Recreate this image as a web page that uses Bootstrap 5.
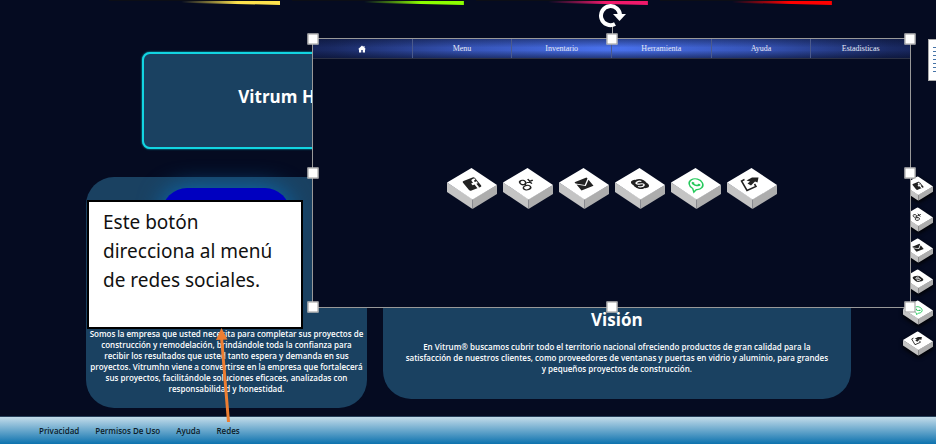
<!DOCTYPE html>
<html lang="es">
<head>
<meta charset="utf-8">
<meta name="viewport" content="width=device-width, initial-scale=1">
<title>Vitrum</title>
<link rel="stylesheet" href="https://cdn.jsdelivr.net/npm/bootstrap@5.3.0/dist/css/bootstrap.min.css">
<style>
body{background:#050b21;color:#fff;font:600 8px/11px "Open Sans",sans-serif;overflow:hidden}
a{text-decoration:none}
.strips{display:grid;grid-template-columns:repeat(4,1fr);gap:12px;padding:0 11.1% 0 11.6%}
.strips svg{display:block;width:100%;height:5px;border-top:1px solid #0c0e16}
.banner{margin:47px 15.2% 0;height:97px;border:2px solid #12d5e2;border-radius:8px;background:#1a4161;box-shadow:0 0 2px #12d5e2;padding-left:94px}
.banner h1{font:700 17px/22px "Open Sans",sans-serif}
.about{display:grid;grid-template-columns:3fr 5fr;gap:16px;padding:28px 9.1% 8px 9.2%}
.panel{background:#1a4161;border-radius:28px;white-space:nowrap}
.pill{width:128px;height:50px;border-radius:36px;background:#0000c0;box-shadow:0 0 24px #0a6cb4}
.mission{padding:11px 0 14px}
.mission p{margin:90px 0 0}
.vision{padding:132px 0 25px}
.vision h2{font:700 17px/22px "Open Sans",sans-serif;margin:0 0 10px}
.vision p{margin:0}
.foot{background:linear-gradient(#c3dcea,#0d72ae);height:28px;gap:16px;padding-left:39px;border-top:1px solid #27405a}
.foot a{color:#0c1c28}
.win{left:312px;top:38px;width:599px;height:270px;background:#050b21;border:1px solid #999;z-index:3}
.menu{height:20px;background:linear-gradient(#050b2166,transparent 45%,transparent 60%,#050b2180),radial-gradient(ellipse 55% 260% at 50% 50%,#4a72ee,#3553b5 45%,#1a2a63 85%,#142052);border-bottom:1px solid #2c3144}
.menu a{color:#e6e9f5;font:400 8px/20px "Liberation Serif",serif;border-right:1px solid #4b5a8c}
.menu a:last-child{border:0}
.keys{gap:6px;padding:109px 0 0 134px}
.keys a,.side a{display:block}
.keys svg{display:block;width:50px;height:41px}
.side{right:3px;top:176px;gap:6px;z-index:2}
.side svg{display:block;width:30px;height:25px;filter:drop-shadow(0 2px 2px #000)}
.grip{width:11px;height:11px;background:#fff;border:1px solid #999;transform:translate(-50%,-50%)}
.g0{left:0}.g5{left:50%}.g10{left:100%}
.t0{top:0}.t5{top:50%}.t10{top:100%}
.stem{left:50%;top:-15px;height:15px;border-left:1px solid #aaa}
.turn{left:50%;top:-37px;width:30px;height:26px;margin-left:-14px}
.note{left:87px;top:200px;width:216px;height:129px;background:#fff;color:#111;border:2px solid #000;padding:6px 14px;font:400 19px/29px "Noto Sans",sans-serif;z-index:4;white-space:nowrap}
.arrow{left:210px;top:328px;width:30px;height:96px;z-index:5}
.sheet{right:0;top:39px;width:8px;height:42px;background:#fff;border:1px solid #aaa;border-right:0;padding:7px 0 0 4px;z-index:2}
.sheet i{display:block;height:1px;background:#4674a8;margin-bottom:3px}
</style>
<script src="https://cdn.jsdelivr.net/npm/bootstrap@5.3.0/dist/js/bootstrap.bundle.min.js"></script>
</head>
<body class="position-relative min-vh-100 d-flex flex-column">
<svg width="0" height="0" class="position-absolute" aria-hidden="true">
<defs>
<symbol id="base" viewBox="0 0 50 41"><path d="M0 14.500 25.500 31V41L0 24Z" fill="#c4c4c4"/><path d="M50 17 25.500 31V41L50 26Z" fill="#adadad"/><path d="M24.500 0 50 17 25.500 31.500 0 14.500Z" fill="#fff"/></symbol>
<g id="fb" transform="matrix(.75 -.3 .5 .6 25 16)"><rect x="-8" y="-8" width="16" height="16" rx="2" fill="#222"/><path d="M2 8V2H-.5V-1H2V-3Q2-6 5-6H7V-3.500H5.500Q4.500-3.500 4.500-2V-1H7L6.500 2H4.500V8Z" fill="#fff"/></g>
<g id="gp" transform="matrix(.75 -.3 .5 .6 24 16)" fill="none" stroke="#222" stroke-width="1.800"><circle cx="-3" cy="-4" r="3.300"/><ellipse cx="-3" cy="4.500" rx="4.300" ry="3.200"/><path d="M-1-1Q-4 0-1 2M5-6V2M1-2H9"/></g>
<g id="ml" transform="matrix(.75 -.3 .5 .6 25 16)" fill="#222"><path d="M-8-7H8V-5L0 1.500-8-5ZM-8-3 0 3.500 8-3V7H-8Z"/></g>
<g id="sk" transform="matrix(.75 -.3 .5 .6 25 16)"><circle r="7.500" fill="#222"/><circle cx="-4" cy="-4" r="4.300" fill="#222"/><circle cx="4" cy="4" r="4.300" fill="#222"/><path d="M3.500-2.500C2-5-3.500-4.500-3.300-2-3 .5 3.500-.5 3.500 2.300 3.500 5-2.500 5-3.800 2" fill="none" stroke="#fff" stroke-width="1.800"/></g>
<g id="wa" transform="matrix(.8 -.3 .5 .68 25 16)"><path d="M-8 8.500-6.500 3.800A7.300 7.300 0 1 1-3.700 6.600Z" fill="none" stroke="#25c95c" stroke-width="1.600"/><path d="M-3.500-3.500C-5 0 0 5 3.600 3.400L4 1.600 2 .6 1 1.600Q-1 1-1.600-1L-.7-2-1.600-4Z" fill="#25c95c"/></g>
<g id="sh"><path d="M17.500 11.500 14.500 13 20 22.500 29 18.500 27.500 16" fill="none" stroke="#222" stroke-width="1.500"/><path d="M19.500 12.500 25 9.500H31.500L30.500 14.500 28 13.500 24 17.500 20.500 15.500 23 13.500Z" fill="#222"/></g>
<linearGradient id="y"><stop offset=".42" stop-color="#ffe34d" stop-opacity="0"/><stop offset=".75" stop-color="#ffe34d"/></linearGradient>
<linearGradient id="l"><stop offset=".42" stop-color="#8cff00" stop-opacity="0"/><stop offset=".75" stop-color="#8cff00"/></linearGradient>
<linearGradient id="p"><stop offset=".42" stop-color="#f0196b" stop-opacity="0"/><stop offset=".75" stop-color="#f0196b"/></linearGradient>
<linearGradient id="r"><stop offset=".42" stop-color="#f00" stop-opacity="0"/><stop offset=".75" stop-color="#f00"/></linearGradient>
</defs>
</svg>

<div class="strips">
<svg viewBox="0 0 172 4" preserveAspectRatio="none"><path d="M0 0H172V4Z" fill="url(#y)"/></svg>
<svg viewBox="0 0 172 4" preserveAspectRatio="none"><path d="M0 0H172V4Z" fill="url(#l)"/></svg>
<svg viewBox="0 0 172 4" preserveAspectRatio="none"><path d="M0 0H172V4Z" fill="url(#p)"/></svg>
<svg viewBox="0 0 172 4" preserveAspectRatio="none"><path d="M0 0H172V4Z" fill="url(#r)"/></svg>
</div>

<header class="banner d-flex align-items-center"><h1 class="m-0 pb-2">Vitrum Ho</h1></header>

<main class="about flex-grow-1 align-items-start text-center">
<section class="panel mission"><div class="pill mx-auto"></div>
<p>Somos la empresa que usted necesita para completar sus proyectos de<br>construcción y remodelación, brindándole toda la confianza para<br>recibir los resultados que usted tanto espera y demanda en sus<br>proyectos. Vitrumhn viene a convertirse en la empresa que fortalecerá<br>sus proyectos, facilitándole soluciones eficaces, analizadas con<br>responsabilidad y honestidad.</p></section>
<section class="panel vision"><h2>Visión</h2>
<p>En Vitrum® buscamos cubrir todo el territorio nacional ofreciendo productos de gran calidad para la<br>satisfacción de nuestros clientes, como proveedores de ventanas y puertas en vidrio y aluminio, para grandes<br>y pequeños proyectos de construcción.</p></section>
</main>

<footer class="foot d-flex align-items-center"><a href="#">Privacidad</a><a href="#">Permisos De Uso</a><a href="#">Ayuda</a><a href="#">Redes</a></footer>

<nav class="side position-absolute d-flex flex-column" aria-label="Redes sociales">
<a href="#" aria-label="Facebook"><svg viewBox="0 0 50 41"><use href="#base"/><use href="#fb"/></svg></a>
<a href="#" aria-label="Google+"><svg viewBox="0 0 50 41"><use href="#base"/><use href="#gp"/></svg></a>
<a href="#" aria-label="Correo"><svg viewBox="0 0 50 41"><use href="#base"/><use href="#ml"/></svg></a>
<a href="#" aria-label="Skype"><svg viewBox="0 0 50 41"><use href="#base"/><use href="#sk"/></svg></a>
<a href="#" aria-label="WhatsApp"><svg viewBox="0 0 50 41"><use href="#base"/><use href="#wa"/></svg></a>
<a href="#" aria-label="Compartir"><svg viewBox="0 0 50 41"><use href="#base"/><use href="#sh"/></svg></a>
</nav>
<div class="sheet position-absolute"><i></i><i></i><i></i><i></i><i></i><i></i><i></i></div>

<section class="win position-absolute">
<nav class="menu d-flex text-center" aria-label="Menú principal">
<a class="col" href="#" aria-label="Inicio"><svg width="8" height="8" viewBox="0 0 16 16"><path d="M8 1 0 8.500H2V15H6.500V10H9.500V15H14V8.500H16L13 5.700V2H11V4Z" fill="#fff"/></svg></a>
<a class="col" href="#">Menu</a><a class="col" href="#">Inventario</a><a class="col" href="#">Herramienta</a><a class="col" href="#">Ayuda</a><a class="col" href="#">Estadisticas</a>
</nav>
<div class="keys d-flex">
<a href="#" aria-label="Facebook"><svg viewBox="0 0 50 41"><use href="#base"/><use href="#fb"/></svg></a>
<a href="#" aria-label="Google+"><svg viewBox="0 0 50 41"><use href="#base"/><use href="#gp"/></svg></a>
<a href="#" aria-label="Correo"><svg viewBox="0 0 50 41"><use href="#base"/><use href="#ml"/></svg></a>
<a href="#" aria-label="Skype"><svg viewBox="0 0 50 41"><use href="#base"/><use href="#sk"/></svg></a>
<a href="#" aria-label="WhatsApp"><svg viewBox="0 0 50 41"><use href="#base"/><use href="#wa"/></svg></a>
<a href="#" aria-label="Compartir"><svg viewBox="0 0 50 41"><use href="#base"/><use href="#sh"/></svg></a>
</div>
<span class="stem position-absolute"></span>
<svg class="turn position-absolute" viewBox="0 0 30 26"><path d="M17 22A9.500 9.500 0 1 1 22 14" fill="none" stroke="#fff" stroke-width="4"/><path d="M15 12H28L21.500 19Z" fill="#fff"/></svg>
<span class="grip position-absolute g0 t0"></span><span class="grip position-absolute g5 t0"></span><span class="grip position-absolute g10 t0"></span>
<span class="grip position-absolute g0 t5"></span><span class="grip position-absolute g10 t5"></span>
<span class="grip position-absolute g0 t10"></span><span class="grip position-absolute g5 t10"></span><span class="grip position-absolute g10 t10"></span>
</section>

<aside class="note position-absolute">Este botón<br>direcciona al menú<br>de redes sociales.</aside>
<svg class="arrow position-absolute" viewBox="0 0 30 96"><path d="M11.500 9 18.500 94" stroke="#ed7d31" stroke-width="3"/><path d="M11.500 0 17.500 11.500 6 12Z" fill="#ed7d31"/></svg>
</body>
</html>
